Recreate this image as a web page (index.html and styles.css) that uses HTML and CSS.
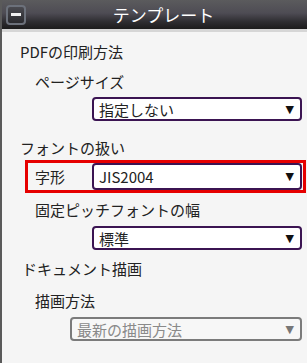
FILE: index.html
```html
<!DOCTYPE html>
<html lang="ja">
<head>
<meta charset="utf-8">
<link rel="stylesheet" href="styles.css">
</head>
<body>
<div class="panel">
  <div class="header">
    <div class="collapse"><span class="dash"></span></div>
    <div class="title">テンプレート</div>
  </div>
  <div class="content">
    <div class="heading h1">PDFの印刷方法</div>
    <div class="label l1">ページサイズ</div>
    <div class="select s1"><span>指定しない</span><span class="arrow">▼</span></div>

    <div class="heading h2">フォントの扱い</div>
    <div class="highlight">
      <div class="inline-label">字形</div>
      <div class="select s2"><span>JIS2004</span><span class="arrow">▼</span></div>
    </div>
    <div class="label l3">固定ピッチフォントの幅</div>
    <div class="select s3"><span>標準</span><span class="arrow">▼</span></div>

    <div class="heading h3">ドキュメント描画</div>
    <div class="label l4">描画方法</div>
    <div class="select disabled s4"><span>最新の描画方法</span><span class="arrow">▼</span></div>
  </div>
</div>
</body>
</html>
```
FILE: styles.css
```css
html, body {
  margin: 0;
  padding: 0;
  background: #f5f5f5;
}
body {
  width: 307px;
  height: 363px;
  overflow: hidden;
  font-family: "Noto Sans CJK JP", "Noto Sans", sans-serif;
  color: #222;
}
.panel {
  height: 363px;
  border-left: 2px solid #5a5a5a;
  box-sizing: border-box;
}
.header {
  height: 29px;
  display: flex;
  align-items: center;
  background: linear-gradient(#5b5b5d 0%, #4e4c54 45%, #2e2d31 75%, #1c1c1c 100%);
  border-bottom: 3px solid #d6d6d6;
}
.collapse {
  width: 16px;
  height: 16px;
  margin-left: 4px;
  border: 2px solid #6c717b;
  border-radius: 4px;
  background: linear-gradient(#4a4a50, #2a2a2e);
  display: flex;
  align-items: center;
  justify-content: center;
}
.dash {
  width: 10px;
  height: 3px;
  background: #f0f0f0;
}
.title {
  flex: 1;
  text-align: center;
  color: #ffffff;
  font-size: 17px;
  line-height: 29px;
  padding-right: 6px;
}
.content {
  display: flex;
  flex-direction: column;
  align-items: flex-start;
}
.heading, .label, .inline-label {
  font-size: 15px;
  line-height: 20px;
  white-space: nowrap;
}
.heading { margin-left: 18px; }
.label { margin-left: 33px; }
.select {
  box-sizing: border-box;
  height: 24px;
  width: 210px;
  margin-left: 90px;
  border: 2px solid #3b1452;
  border-radius: 4px;
  background: #ffffff;
  display: flex;
  align-items: center;
  justify-content: space-between;
  padding: 0 6px 0 5px;
  font-size: 15px;
  color: #222;
}
.arrow {
  font-family: "DejaVu Sans", sans-serif;
  font-size: 11px;
  color: #111;
}
.select.disabled {
  border-color: #7b7b7b;
  color: #8a8a8a;
  background: #f7f7f7;
}
.select.disabled .arrow { color: #777; }
.h1 { margin-top: 10px; }
.l1 { margin-top: 10px; }
.s1 { margin-top: 5px; }
.h2 { margin-top: 17px; }
.l3 { margin-top: 7px; }
.s3 { margin-top: 6px; }
.h3 { margin-top: 9px; margin-left: 20px; }
.l4 { margin-top: 12px; }
.select.s4 { margin-top: 6px; margin-left: 68px; width: 232px; }
.highlight {
  box-sizing: border-box;
  margin-top: 2px;
  margin-left: 23px;
  width: 281px;
  height: 33px;
  border: 3px solid #e60000;
  display: flex;
  align-items: center;
}
.highlight .inline-label {
  margin-left: 7px;
  width: 57px;
}
.highlight .select {
  margin-left: 0;
  height: 27px;
  width: 210px;
}
```
